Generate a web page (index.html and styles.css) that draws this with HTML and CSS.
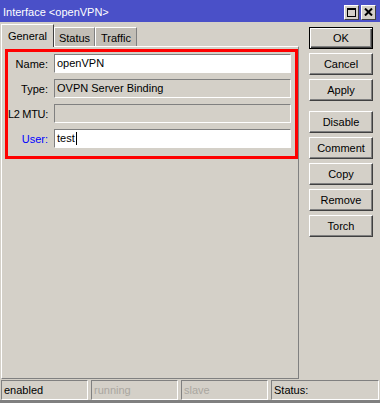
FILE: index.html
```html
<html>
<head>
    <meta charset="UTF-8">
    <title>Interface &lt;openVPN&gt;</title>
    <link rel="stylesheet" href="styles.css">
</head>
<body>
    <div class="titlebar">
        <span class="title">Interface &lt;openVPN&gt;</span>
        <div class="win-buttons">
            <span class="win-btn">
                <svg width="9" height="9" viewBox="0 0 9 9"><rect x="0.5" y="0.5" width="8" height="8" fill="none" stroke="#000"/><rect x="0" y="0" width="9" height="2" fill="#000"/></svg>
            </span>
            <span class="win-btn">
                <svg width="9" height="8" viewBox="0 0 9 8"><path d="M1 0.5 L8 7.5 M8 0.5 L1 7.5" stroke="#000" stroke-width="2"/></svg>
            </span>
        </div>
    </div>

    <div class="main">
        <div class="left">
            <div class="tabs">
                <div class="tab active">General</div>
                <div class="tab tab-status">Status</div>
                <div class="tab tab-traffic">Traffic</div>
            </div>
            <div class="panel">
                <div class="highlight">
                    <div class="row">
                        <label>Name:</label>
                        <div class="field">openVPN</div>
                    </div>
                    <div class="row">
                        <label>Type:</label>
                        <div class="field readonly">OVPN Server Binding</div>
                    </div>
                    <div class="row">
                        <label class="tight">L2 MTU:</label>
                        <div class="field readonly"></div>
                    </div>
                    <div class="row">
                        <label class="blue">User:</label>
                        <div class="field">test<span class="caret"></span></div>
                    </div>
                </div>
            </div>
        </div>
        <div class="side">
            <button class="btn default">OK</button>
            <button class="btn">Cancel</button>
            <button class="btn">Apply</button>
            <button class="btn spaced">Disable</button>
            <button class="btn">Comment</button>
            <button class="btn">Copy</button>
            <button class="btn">Remove</button>
            <button class="btn">Torch</button>
        </div>
    </div>

    <div class="statusbar">
        <div class="cell">enabled</div>
        <div class="cell off">running</div>
        <div class="cell off">slave</div>
        <div class="cell wide">Status:</div>
    </div>
</body>
</html>
```

FILE: styles.css
```css
* {
    margin: 0;
    padding: 0;
    box-sizing: border-box;
}

body {
    width: 380px;
    height: 403px;
    background: #d4d0c8;
    font-family: 'Liberation Sans', Arial, sans-serif;
    font-size: 11px;
    color: #000;
    overflow: hidden;
    border-bottom: 3px solid #808080;
}

.titlebar {
    height: 22px;
    background: #4a50c8;
    display: flex;
    align-items: center;
    padding: 0 4px 0 3px;
}

.title {
    color: #fff;
    font-size: 11px;
    padding-top: 1px;
}

.win-buttons {
    margin-left: auto;
    display: flex;
    gap: 2px;
    padding-top: 2px;
}

.win-btn {
    width: 15px;
    height: 15px;
    background: #d4d0c8;
    border: 1px solid;
    border-color: #fff #404040 #404040 #fff;
    display: flex;
    align-items: center;
    justify-content: center;
}

.main {
    height: 358px;
    display: flex;
    padding-left: 1px;
}

.left {
    width: 298px;
    display: flex;
    flex-direction: column;
}

.tabs {
    height: 23px;
    margin-top: 1px;
    display: flex;
    align-items: flex-end;
    position: relative;
    z-index: 1;
}

.tab {
    height: 19px;
    background: #c2beb6;
    border: 1px solid;
    border-color: #fff #808080 transparent #fff;
    border-bottom: none;
    display: flex;
    align-items: center;
    justify-content: center;
    padding-top: 1px;
}

.tab.active {
    width: 53px;
    height: 23px;
    margin-bottom: -1px;
    background: #d4d0c8;
    border-right-color: #404040;
    padding-bottom: 2px;
}

.tab-status {
    width: 41px;
}

.tab-traffic {
    width: 42px;
}

.panel {
    height: 333px;
    border: 1px solid;
    border-color: #fff #808080 #808080 #fff;
    padding: 2px 0 0 3px;
}

.highlight {
    width: 293px;
    height: 110px;
    border: 3px solid #ff0000;
    padding: 2px 4px 0 0;
    display: flex;
    flex-direction: column;
    gap: 6px;
}

.row {
    display: flex;
    align-items: center;
    height: 19px;
}

.row label {
    width: 40px;
    text-align: right;
    margin-right: 6px;
    white-space: nowrap;
    flex-shrink: 0;
    display: flex;
    justify-content: flex-end;
}

.row label.tight {
    letter-spacing: -0.3px;
}

.row label.blue {
    color: #0000ff;
}

.field {
    flex: 1;
    height: 19px;
    background: #fff;
    border: 1px solid;
    border-color: #808080 #fff #fff #808080;
    padding: 0 2px;
    line-height: 17px;
    display: flex;
    align-items: center;
}

.field.readonly {
    background: #d4d0c8;
}

.caret {
    display: inline-block;
    width: 1px;
    height: 13px;
    background: #000;
    margin-left: 1px;
}

.side {
    margin-left: 10px;
    padding-top: 5px;
    display: flex;
    flex-direction: column;
    gap: 4px;
}

.btn {
    width: 64px;
    height: 22px;
    background: #d4d0c8;
    font-family: 'Liberation Sans', Arial, sans-serif;
    font-size: 11px;
    color: #000;
    border: 1px solid;
    border-color: #fff #404040 #404040 #fff;
    box-shadow: inset -1px -1px 0 #808080;
}

.btn.default {
    border: 1px solid #000;
    box-shadow: inset 1px 1px 0 #fff, inset -1px -1px 0 #404040, inset -2px -2px 0 #808080;
}

.btn.spaced {
    margin-top: 6px;
}

.statusbar {
    display: flex;
    gap: 3px;
    padding-left: 1px;
}

.cell {
    width: 87px;
    height: 20px;
    border: 1px solid;
    border-color: #808080 #fff #fff #808080;
    padding-left: 2px;
    line-height: 18px;
}

.cell.off {
    color: #aaa7a0;
}

.cell.wide {
    width: 108px;
}
```
